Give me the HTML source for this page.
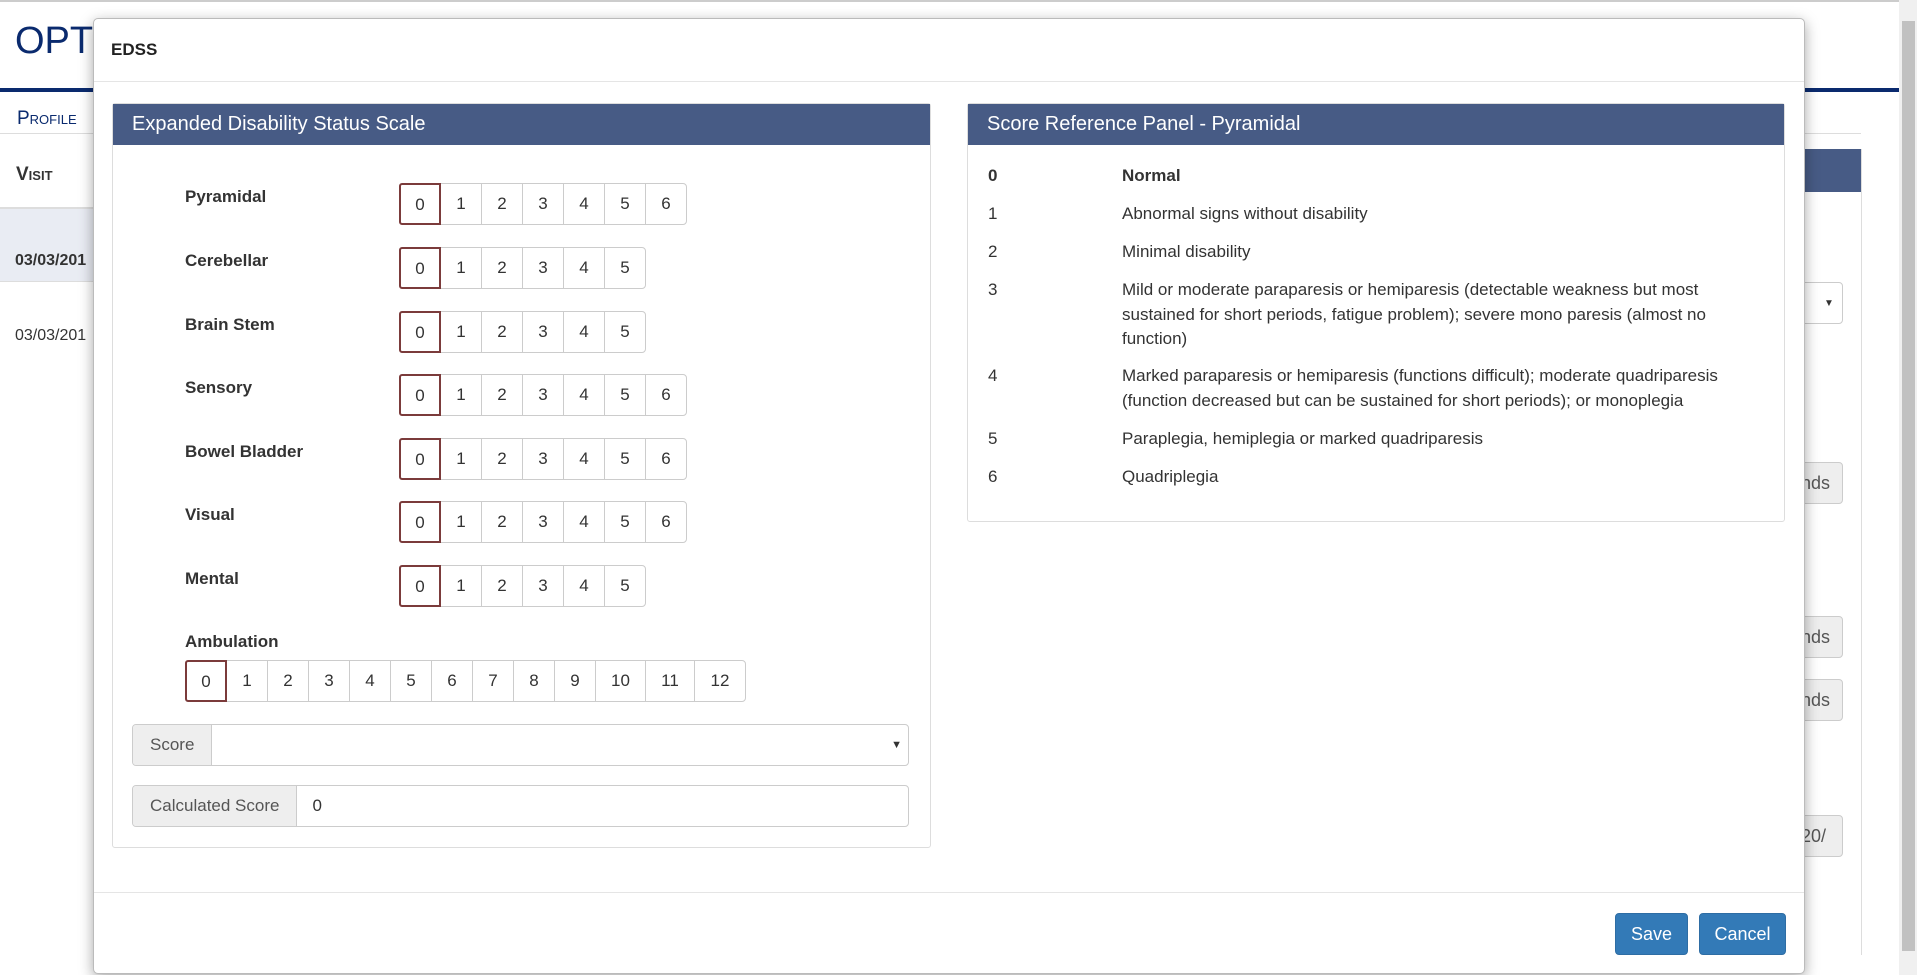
<!DOCTYPE html>
<html><head><meta charset="utf-8"><style>
*{box-sizing:border-box;margin:0;padding:0}
body{width:1917px;height:975px;overflow:hidden;background:#fff;font-family:"Liberation Sans",Arial,sans-serif;color:#333;position:relative;font-size:17px}
.a{position:absolute}
.topline{left:0;top:0;width:1899px;height:2px;background:#ccc}
.opt{left:15px;top:20px;font-size:38px;color:#0a2a6e}
.navy{left:0;top:88px;width:1899px;height:4px;background:#0a2a6e}
.sc{font-variant:small-caps;color:#0a2a6e;font-size:19px}
.sb{left:1899px;top:0;width:18px;height:975px;background:#f0f0f0}
.thumb{left:1902px;top:21px;width:13px;height:930px;background:#c1c1c1}
.modal{left:93px;top:18px;width:1712px;height:956px;background:#fff;border:1px solid #bbb;border-radius:5px;box-shadow:0 4px 14px rgba(0,0,0,.35)}
.panel{border:1px solid #ddd;border-radius:3px;background:#fff}
.ph{background:#475b85;color:#fff;font-size:20px;height:41px;line-height:41px;padding-left:19px}
.lbl{font-weight:bold;font-size:17px}
.grp{display:flex;height:42px}
.grp div{width:42px;height:42px;border:1px solid #ccc;margin-left:-1px;text-align:center;line-height:40px;font-size:17px;background:#fff}
.grp div:first-child{border:2px solid #7b3b3b;margin-left:0;border-radius:3px 0 0 3px;position:relative;z-index:1}
.grp div:last-child{border-radius:0 4px 4px 0}
.ig{display:flex;height:42px;border:1px solid #ccc;border-radius:4px;overflow:hidden}
.ig .ad{background:#eee;border-right:1px solid #ccc;padding:0 17px;line-height:40px;color:#555}
.ig .in{flex:1;line-height:40px;padding-left:15px;position:relative}
.row{position:absolute;left:0;width:100%;line-height:24.5px;white-space:nowrap}
.row .n{position:absolute;left:20px}
.row .t{position:absolute;left:154px}
.btn{background:#337ab7;color:#fff;border:1px solid #2e6da4;border-radius:4px;text-align:center;line-height:40px;font-size:18px}
.gb{background:#eee;border:1px solid #ccc;border-radius:4px;color:#555;font-size:18px;line-height:40px;padding-left:0}
</style></head><body>
<div class="a topline"></div>
<div class="a opt">OPT</div>
<div class="a navy"></div>
<div class="a sc" style="left:17px;top:108px">Profile</div>
<div class="a" style="left:0;top:133px;width:1861px;height:1px;background:#ddd"></div>
<div class="a sc" style="left:16px;top:164px;font-weight:bold;color:#333">Visit</div>
<div class="a" style="left:0;top:207px;width:100px;height:75px;background:#e9ecf3;border-top:2px solid #ddd;border-bottom:1px solid #ddd"></div>
<div class="a" style="left:15px;top:252px;font-weight:bold;font-size:16px">03/03/201</div>
<div class="a" style="left:15px;top:327px;font-size:16px">03/03/201</div>
<div class="a" style="left:1805px;top:149px;width:57px;height:43px;background:#475b85"></div>
<div class="a" style="left:1861px;top:149px;width:1px;height:806px;background:#ddd"></div>
<div class="a" style="left:1790px;top:282px;width:53px;height:42px;border:1px solid #ccc;border-radius:4px"></div>
<div class="a" style="left:1824px;top:298px;font-size:10px">▼</div>
<div class="a gb" style="left:1780px;top:462px;width:63px;height:42px;padding-left:20px">nds</div>
<div class="a gb" style="left:1780px;top:616px;width:63px;height:42px;padding-left:20px">nds</div>
<div class="a gb" style="left:1780px;top:679px;width:63px;height:42px;padding-left:20px">nds</div>
<div class="a gb" style="left:1780px;top:815px;width:63px;height:42px;padding-left:20px">20/</div>
<div class="a sb"></div><div class="a thumb"></div>

<div class="a modal">
 <div class="a" style="left:17px;top:21px;font-weight:bold;font-size:17px;color:#222">EDSS</div>
 <div class="a" style="left:0;top:62px;width:100%;height:1px;background:#e5e5e5"></div>
 <div class="a panel" style="left:18px;top:84px;width:819px;height:745px">
  <div class="ph">Expanded Disability Status Scale</div>
 </div>
 <div class="a panel" style="left:873px;top:84px;width:818px;height:419px">
  <div class="ph">Score Reference Panel - Pyramidal</div>
  <div class="row" style="top:60px;font-weight:bold"><span class="n">0</span><span class="t">Normal</span></div>
  <div class="row" style="top:98px"><span class="n">1</span><span class="t">Abnormal signs without disability</span></div>
  <div class="row" style="top:136px"><span class="n">2</span><span class="t">Minimal disability</span></div>
  <div class="row" style="top:174px"><span class="n">3</span><span class="t">Mild or moderate paraparesis or hemiparesis (detectable weakness but most<br>sustained for short periods, fatigue problem); severe mono paresis (almost no<br>function)</span></div>
  <div class="row" style="top:260px"><span class="n">4</span><span class="t">Marked paraparesis or hemiparesis (functions difficult); moderate quadriparesis<br>(function decreased but can be sustained for short periods); or monoplegia</span></div>
  <div class="row" style="top:323px"><span class="n">5</span><span class="t">Paraplegia, hemiplegia or marked quadriparesis</span></div>
  <div class="row" style="top:361px"><span class="n">6</span><span class="t">Quadriplegia</span></div>
 </div>
 <div class="a" style="left:0;top:873px;width:100%;height:1px;background:#e5e5e5"></div>
 <div class="a btn" style="left:1521px;top:894px;width:73px;height:42px">Save</div>
 <div class="a btn" style="left:1605px;top:894px;width:87px;height:42px">Cancel</div>
</div>

<div class="a lbl" style="left:185px;top:187px">Pyramidal</div>
<div class="a grp" style="left:399px;top:183px"><div>0</div><div>1</div><div>2</div><div>3</div><div>4</div><div>5</div><div>6</div></div>
<div class="a lbl" style="left:185px;top:251px">Cerebellar</div>
<div class="a grp" style="left:399px;top:247px"><div>0</div><div>1</div><div>2</div><div>3</div><div>4</div><div>5</div></div>
<div class="a lbl" style="left:185px;top:315px">Brain Stem</div>
<div class="a grp" style="left:399px;top:311px"><div>0</div><div>1</div><div>2</div><div>3</div><div>4</div><div>5</div></div>
<div class="a lbl" style="left:185px;top:378px">Sensory</div>
<div class="a grp" style="left:399px;top:374px"><div>0</div><div>1</div><div>2</div><div>3</div><div>4</div><div>5</div><div>6</div></div>
<div class="a lbl" style="left:185px;top:442px">Bowel Bladder</div>
<div class="a grp" style="left:399px;top:438px"><div>0</div><div>1</div><div>2</div><div>3</div><div>4</div><div>5</div><div>6</div></div>
<div class="a lbl" style="left:185px;top:505px">Visual</div>
<div class="a grp" style="left:399px;top:501px"><div>0</div><div>1</div><div>2</div><div>3</div><div>4</div><div>5</div><div>6</div></div>
<div class="a lbl" style="left:185px;top:569px">Mental</div>
<div class="a grp" style="left:399px;top:565px"><div>0</div><div>1</div><div>2</div><div>3</div><div>4</div><div>5</div></div>
<div class="a lbl" style="left:185px;top:632px">Ambulation</div>
<div class="a grp" style="left:185px;top:660px"><div>0</div><div>1</div><div>2</div><div>3</div><div>4</div><div>5</div><div>6</div><div>7</div><div>8</div><div>9</div><div style="width:51px">10</div><div style="width:50px">11</div><div style="width:52px">12</div></div>
<div class="a ig" style="left:132px;top:724px;width:777px"><div class="ad">Score</div><div class="in"><span style="position:absolute;right:6px;font-size:11px">▼</span></div></div>
<div class="a ig" style="left:132px;top:785px;width:777px"><div class="ad">Calculated Score</div><div class="in">0</div></div>
</body></html>
